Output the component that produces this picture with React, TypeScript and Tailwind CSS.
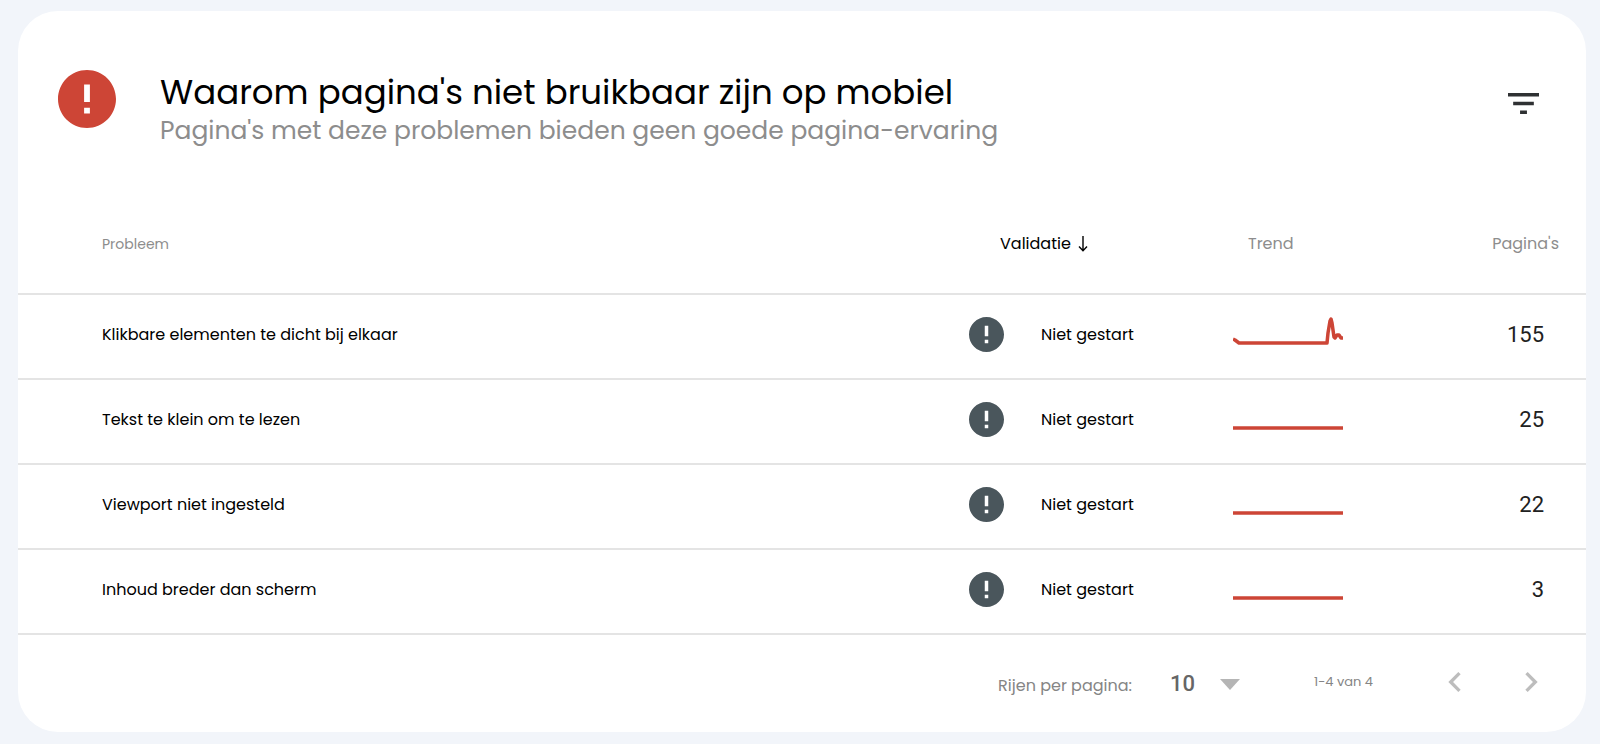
import { useState } from "react";

interface Issue {
  name: string;
  status: string;
  pages: number;
  trend: string;
}

const issues: Issue[] = [
  {
    name: "Klikbare elementen te dicht bij elkaar",
    status: "Niet gestart",
    pages: 155,
    trend: "M0 24L2 25L6 28H94L95 18L97 6L98 4L99 8L101 22L102 23L104 20L106 20L108 23H110",
  },
  { name: "Tekst te klein om te lezen", status: "Niet gestart", pages: 25, trend: "M0 28H110" },
  { name: "Viewport niet ingesteld", status: "Niet gestart", pages: 22, trend: "M0 28H110" },
  { name: "Inhoud breder dan scherm", status: "Niet gestart", pages: 3, trend: "M0 28H110" },
];

function ErrorIcon({ className }: { className: string }) {
  return (
    <svg className={className} viewBox="2 2 20 20" fill="currentColor" aria-hidden="true">
      <path d="M12 2C6.480 2 2 6.480 2 12s4.480 10 10 10 10-4.480 10-10S17.520 2 12 2zm1 15h-2v-2h2v2zm0-4h-2V7h2v6z" />
    </svg>
  );
}

function Header() {
  return (
    <header className="flex items-start pt-[59px] pl-10 pr-[47px]">
      <ErrorIcon className="h-[58px] w-[58px] shrink-0 text-[#cd4536]" />
      <div className="ml-[44px] flex-1">
        <h1 className="text-[34px] leading-[44px] text-black">Waarom pagina's niet bruikbaar zijn op mobiel</h1>
        <p className="text-[25px] leading-[34px] text-[#8d8d8d]">Pagina's met deze problemen bieden geen goede pagina-ervaring</p>
      </div>
      <button type="button" aria-label="Filteren" className="mt-[23px] text-[#2f3133]">
        <svg className="h-[21px] w-[31px]" viewBox="3 6 18 12" preserveAspectRatio="none" fill="currentColor">
          <path d="M10 18h4v-2h-4v2zM3 6v2h18V6H3zm3 7h12v-2H6v2z" />
        </svg>
      </button>
    </header>
  );
}

function IssueTable() {
  return (
    <table className="mt-[46px] w-full table-fixed text-base text-black">
      <colgroup>
        <col />
        <col className="w-[264px]" />
        <col className="w-[176px]" />
        <col className="w-[177px]" />
      </colgroup>
      <thead>
        <tr className="h-[100px] border-b-2 border-[#e4e4e4] text-left text-[#8d8d8d]">
          <th scope="col" className="pl-[84px] text-sm font-normal">Probleem</th>
          <th scope="col" className="pl-[31px] font-normal text-black">
            <button type="button" className="flex items-center gap-[7px]">
              Validatie
              <svg className="h-4 w-[10px]" viewBox="0 0 10 16" fill="none" stroke="currentColor" strokeWidth="1.4" aria-hidden="true">
                <path d="M5 0V14.500M1 10.500L5 14.700L9 10.500" />
              </svg>
            </button>
          </th>
          <th scope="col" className="pl-[15px] font-normal">Trend</th>
          <th scope="col" className="pr-[27px] text-right font-normal">Pagina's</th>
        </tr>
      </thead>
      <tbody>
        {issues.map((issue) => (
          <tr key={issue.name} className="h-[85px] border-b-2 border-[#e4e4e4]">
            <td className="pl-[84px] pb-1">{issue.name}</td>
            <td className="pb-1">
              <div className="flex items-center gap-[37px]">
                <ErrorIcon className="h-[35px] w-[35px] text-[#4a565c]" />
                {issue.status}
              </div>
            </td>
            <td className="pb-1">
              <svg className="h-10 w-[110px]" viewBox="0 0 110 40" fill="none" stroke="#cd4536" strokeWidth="3.5" strokeLinejoin="round" aria-hidden="true">
                <path d={issue.trend} />
              </svg>
            </td>
            <td className="pr-[42px] pb-1 text-right font-[Roboto] text-[22px] text-[#212121]">{issue.pages}</td>
          </tr>
        ))}
      </tbody>
    </table>
  );
}

function Pagination() {
  const [rows, setRows] = useState("10");

  return (
    <footer className="flex h-[97px] items-center justify-end pr-12 text-[#858585]">
      <label htmlFor="rows" className="pt-1 text-base">Rijen per pagina:</label>
      <div className="relative ml-[38px] w-[70px]">
        <select
          id="rows"
          className="w-full appearance-none bg-transparent font-[Roboto] text-[22px] font-medium text-[#666666]"
          value={rows}
          onChange={(e) => setRows(e.target.value)}
        >
          <option value="10">10</option>
          <option value="25">25</option>
          <option value="50">50</option>
        </select>
        <svg className="pointer-events-none absolute top-3 right-0 h-[11px] w-5 text-[#b5b5b5]" viewBox="0 0 20 11" fill="currentColor" aria-hidden="true">
          <path d="M0 0H20L10 11Z" />
        </svg>
      </div>
      <span className="ml-[74px] pb-1 text-[13px]">1-4 van 4</span>
      <button type="button" aria-label="Vorige pagina" className="ml-[75px] pb-1 text-[#bdbdbd]">
        <svg className="h-5 w-[13px]" viewBox="8 6 7.410 12" fill="currentColor">
          <path d="M15.410 7.410L14 6l-6 6 6 6 1.410-1.410L10.830 12z" />
        </svg>
      </button>
      <button type="button" aria-label="Volgende pagina" className="ml-16 pb-1 text-[#bdbdbd]">
        <svg className="h-5 w-[13px]" viewBox="8.590 6 7.410 12" fill="currentColor">
          <path d="M10 6L8.590 7.410 13.170 12l-4.580 4.590L10 18l6-6z" />
        </svg>
      </button>
    </footer>
  );
}

function App() {
  return (
    <div className="min-h-screen bg-[#f2f5fa] pt-[11px] pr-[14px] pb-3 pl-[18px] font-[Poppins,Inter,sans-serif]">
      <main className="rounded-[40px] bg-white">
        <Header />
        <IssueTable />
        <Pagination />
      </main>
    </div>
  );
}

export default App;
